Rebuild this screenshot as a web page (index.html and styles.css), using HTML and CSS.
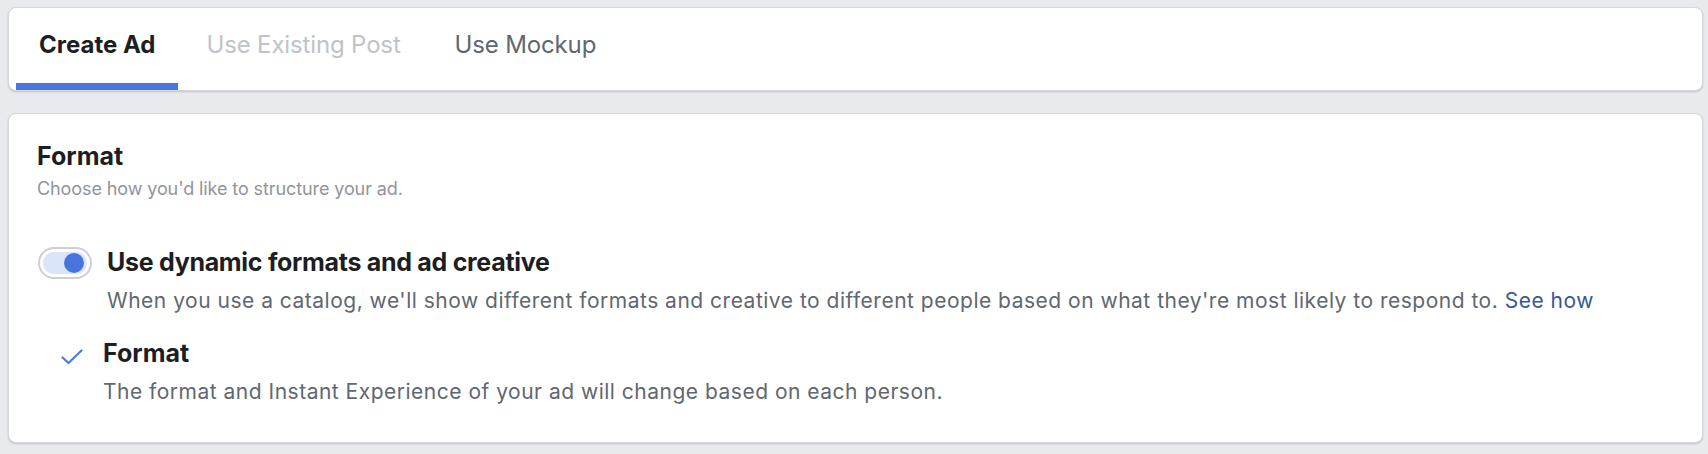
FILE: index.html
```html
<!DOCTYPE html>
<html lang="en">
<head>
<meta charset="utf-8">
<title>Create Ad</title>
<link rel="stylesheet" href="styles.css">
</head>
<body>
<div class="page">
  <nav class="card tabs">
    <div class="tab active">Create Ad</div>
    <div class="tab disabled">Use Existing Post</div>
    <div class="tab">Use Mockup</div>
  </nav>
  <section class="card format">
    <h2 class="heading">Format</h2>
    <p class="sub">Choose how you'd like to structure your ad.</p>
    <div class="option">
      <div class="toggle"><div class="track"><span class="knob"></span></div></div>
      <div class="opt-body">
        <div class="opt-title">Use dynamic formats and ad creative</div>
        <div class="opt-desc">When you use a catalog, we'll show different formats and creative to different people based on what they're most likely to respond to. <a class="link" href="#">See how</a></div>
      </div>
    </div>
    <div class="option checked">
      <div class="check-wrap">
        <svg class="check" viewBox="0 0 22 16" width="22" height="16"><path d="M1.5 8.5 L7.5 14 L20.5 1.5" fill="none" stroke="#4a7be3" stroke-width="2.2" stroke-linecap="round" stroke-linejoin="round"/></svg>
      </div>
      <div class="opt-body">
        <div class="opt-title short">Format</div>
        <div class="opt-desc">The format and Instant Experience of your ad will change based on each person.</div>
      </div>
    </div>
  </section>
</div>
</body>
</html>
```

FILE: styles.css
```css
* { box-sizing: border-box; }
html, body { margin: 0; padding: 0; }
body {
  background: #e9eaed;
  font-family: Inter, "Noto Sans", "Liberation Sans", sans-serif;
  color: #1c1e21;
}
.page {
  display: flex;
  flex-direction: column;
  gap: 22px;
  padding: 7px 5px 10px 8px;
}
.card {
  background: #fff;
  border: 1px solid #d6d8dc;
  border-radius: 8px;
  box-shadow: 0 1px 2px rgba(0, 0, 0, 0.18);
}
.tabs {
  display: flex;
  height: 84px;
  padding: 0 7px;
  gap: 5px;
}
.tab {
  position: relative;
  padding: 22px 23px 0 23px;
  font-size: 24px;
  line-height: 29px;
  letter-spacing: -0.15px;
  color: #606770;
}
.tab.active {
  font-weight: 700;
  letter-spacing: 0;
  color: #1c1e21;
}
.tab.active::after {
  content: "";
  position: absolute;
  left: 0;
  right: 0;
  bottom: 0;
  height: 7px;
  background: #4877dd;
}
.tab.disabled {
  color: #bec3c9;
  padding-right: 26px;
}

.format {
  padding: 27px 28px 38px 28px;
}
.heading {
  margin: 0;
  font-size: 25px;
  line-height: 30px;
  font-weight: 700;
}
.sub {
  margin: 7px 0 0;
  font-size: 18px;
  line-height: 22px;
  letter-spacing: -0.1px;
  color: #90949c;
}
.option {
  display: flex;
  align-items: flex-start;
  margin-top: 47px;
}
.option.checked { margin-top: 25px; }
.toggle {
  width: 54px;
  height: 32px;
  border: 2px solid #ccd0d5;
  border-radius: 16px;
  padding: 3px;
  margin-left: 1px;
  margin-right: 15px;
  flex: none;
}
.track {
  height: 100%;
  border-radius: 12px;
  background: #dbe5f9;
  display: flex;
  justify-content: flex-end;
  align-items: center;
  padding-right: 3px;
}
.knob {
  width: 20px;
  height: 20px;
  border-radius: 50%;
  background: #4675e0;
}
.check-wrap {
  width: 66px;
  flex: none;
  padding-left: 24px;
  padding-top: 11px;
}
.check { display: block; }
.opt-title {
  font-size: 25px;
  line-height: 30px;
  font-weight: 700;
  letter-spacing: -0.3px;
}
.opt-title.short { letter-spacing: 0; }
.opt-desc {
  margin-top: 11px;
  font-size: 21px;
  line-height: 25px;
  letter-spacing: 0.5px;
  color: #606770;
}
.link {
  color: #385898;
  text-decoration: none;
}
```
